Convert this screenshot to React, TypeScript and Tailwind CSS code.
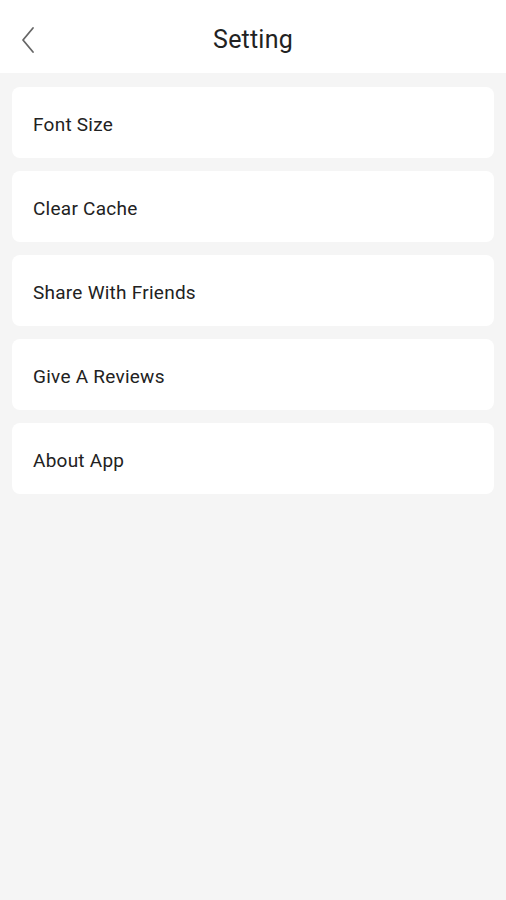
const ITEMS = ["Font Size", "Clear Cache", "Share With Friends", "Give A Reviews", "About App"];

const App = () => {
  return (
    <div className="min-h-[900px] w-full bg-[#f5f5f5] font-['Roboto',sans-serif] text-[#1f1f1f]">
      <div className="flex h-[73px] items-center justify-center bg-white relative">
        <button className="absolute left-[16px] top-[25px] flex h-[30px] w-[24px] items-center justify-center">
          <svg width="18" height="28" viewBox="0 0 18 28" fill="none">
            <path d="M14 2 L4 14 L14 26" stroke="#666" strokeWidth="1.8" strokeLinecap="round" strokeLinejoin="round" />
          </svg>
        </button>
        <h1 className="pt-[6px] text-[25px] leading-none tracking-[0.2px] text-[#222]">Setting</h1>
      </div>
      <ul className="flex flex-col gap-[13px] px-[12px] pt-[14px]">
        {ITEMS.map((item) => (
          <li
            key={item}
            className="flex h-[71px] items-center rounded-[8px] bg-white px-[21px] pt-[5px] text-[19px] tracking-[0.25px] text-[#222]"
          >
            {item}
          </li>
        ))}
      </ul>
    </div>
  );
};

export default App;
